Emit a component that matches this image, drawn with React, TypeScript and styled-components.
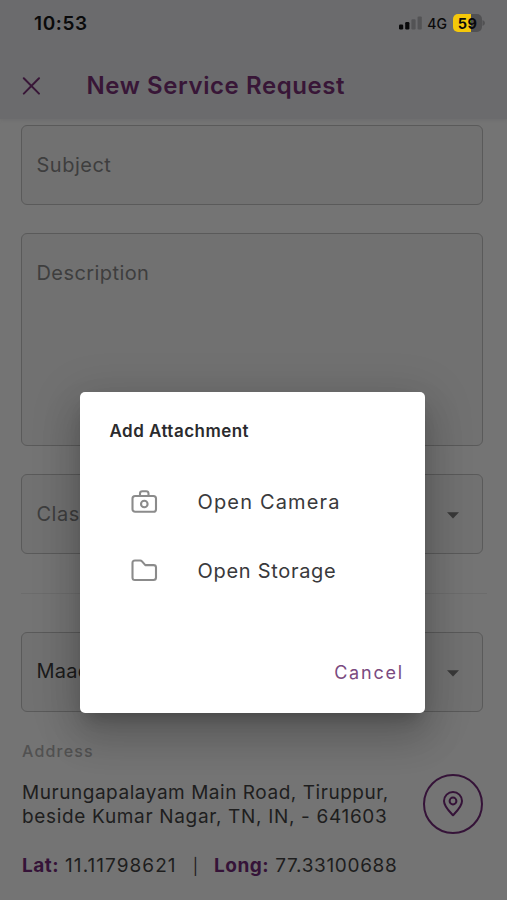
import React from "react";
import styled, { createGlobalStyle } from "styled-components";

const GlobalStyle = createGlobalStyle`
  * { box-sizing: border-box; }
  html, body { margin: 0; padding: 0; background: #747474; }
  body { font-family: Inter, "Noto Sans", sans-serif; overflow: hidden; }
  button { font: inherit; background: none; border: 0; padding: 0; margin: 0; color: inherit; }
`;

const Screen = styled.div`
  position: relative;
  width: 507px;
  height: 900px;
  background: #747474;
  overflow: hidden;
`;

const TopArea = styled.header`
  height: 119px;
  background: #6b6b6d;
  box-shadow: 0 1px 3px rgba(107, 107, 109, 0.8);
`;

const StatusBar = styled.div`
  display: flex;
  justify-content: space-between;
  align-items: center;
  height: 46px;
  padding: 0 22px 0 34px;
  color: #0a0a0b;
`;

const Clock = styled.span`
  font-size: 19px;
  font-weight: 600;
  letter-spacing: 0.6px;
`;

const StatusIcons = styled.div`
  display: flex;
  align-items: center;
`;

const Network = styled.span`
  margin: 0 6px 0 5px;
  font-size: 14px;
  font-weight: 500;
  letter-spacing: 0.1px;
`;

const Battery = styled.div`
  display: flex;
  align-items: center;
  justify-content: center;
  width: 29px;
  height: 18px;
  border-radius: 5px;
  background: linear-gradient(90deg, #f5c80a 0 18px, #515153 18px);
  font-size: 14.5px;
  font-weight: 700;
  letter-spacing: 0.3px;
`;

const TitleBar = styled.div`
  display: flex;
  align-items: center;
  height: 79px;
  padding-left: 22px;
  color: #381637;
`;

const CloseButton = styled.button`
  display: flex;
  width: 64.5px;
`;

const Title = styled.h1`
  margin: 0;
  font-size: 24px;
  font-weight: 600;
  letter-spacing: 0.58px;
`;

const Form = styled.main`
  display: flex;
  flex-direction: column;
  padding: 6px 24px 0 21px;
`;

const Field = styled.div<{ $height?: number; $filled?: boolean }>`
  display: flex;
  justify-content: space-between;
  height: ${(p) => p.$height ?? 80}px;
  margin-bottom: 28px;
  padding: 25px 23px 0 14.5px;
  border: 1.5px solid #5a5a5a;
  border-radius: 6px;
  background: #717171;
  color: ${(p) => (p.$filled ? "#1b1b1b" : "#3e3e3e")};
`;

const FieldLabel = styled.span<{ $spacing: number; $lineHeight?: number }>`
  font-size: 20px;
  line-height: ${(p) => p.$lineHeight ?? 28}px;
  letter-spacing: ${(p) => p.$spacing}px;
`;

const Arrow = styled.svg`
  margin-top: 11.5px;
`;

const Divider = styled.hr`
  width: 466px;
  height: 1px;
  margin: 11px 0 38px;
  border: 0;
  background: #6c6c6c;
`;

const AddressLabel = styled.div`
  margin: -1px 0 0 1px;
  font-size: 16px;
  font-weight: 500;
  line-height: 24px;
  letter-spacing: 1.2px;
  color: #515151;
`;

const AddressRow = styled.div`
  display: flex;
  justify-content: space-between;
  height: 87px;
  padding: 11px 0 0 1px;
`;

const AddressText = styled.div`
  padding-top: 7px;
  font-size: 19px;
  line-height: 23.5px;
  color: #1e1e1e;
`;

const AddressLine = styled.div<{ $spacing: number }>`
  letter-spacing: ${(p) => p.$spacing}px;
  white-space: nowrap;
`;

const PinButton = styled.button`
  display: flex;
  align-items: center;
  justify-content: center;
  width: 60px;
  height: 60px;
  border: 2px solid #351338;
  border-radius: 50%;
`;

const Coordinates = styled.div`
  display: flex;
  margin: 4px 0 0 1px;
  font-size: 19px;
  line-height: 24px;
  color: #1e1e1e;
  white-space: pre;
`;

const CoordinateName = styled.strong`
  margin-right: 1px;
  font-weight: 700;
  letter-spacing: 0.5px;
  color: #351338;
`;

const CoordinateValue = styled.span<{ $spacing: number }>`
  letter-spacing: ${(p) => p.$spacing}px;
`;

const Separator = styled.span`
  width: 37.5px;
  font-size: 16px;
  text-align: center;
`;

const Dialog = styled.section`
  position: absolute;
  left: 79.5px;
  top: 391.5px;
  display: flex;
  flex-direction: column;
  width: 345px;
  height: 321.5px;
  padding: 27.5px 20.5px 0 30px;
  border-radius: 5px;
  background: #fff;
  box-shadow: 0 11px 15px -7px rgba(0, 0, 0, 0.2), 0 24px 38px 3px rgba(0, 0, 0, 0.14),
    0 9px 46px 8px rgba(0, 0, 0, 0.12);
`;

const DialogTitle = styled.h2`
  margin: 0 0 24px;
  font-size: 17px;
  font-weight: 600;
  line-height: 24px;
  letter-spacing: 0.47px;
  color: #2b2b2d;
`;

const Option = styled.button`
  display: flex;
  align-items: center;
  height: 69px;
  padding-left: 21px;
  gap: 39px;
  color: #8b8b8b;
`;

const OptionText = styled.span<{ $spacing: number }>`
  font-size: 20px;
  letter-spacing: ${(p) => p.$spacing}px;
  color: #39393b;
`;

const CancelButton = styled.button`
  align-self: flex-end;
  margin-top: 56px;
  font-size: 18px;
  line-height: 24px;
  letter-spacing: 1.8px;
  color: #7b4a80;
`;

const SignalIcon = () => (
  <svg width="23" height="14" viewBox="0 0 23 14">
    <rect x="0" y="8.5" width="4.2" height="5" rx="1.2" fill="#09090a" />
    <rect x="6.2" y="6" width="4.2" height="7.5" rx="1.2" fill="#09090a" />
    <rect x="12.4" y="3.2" width="4.2" height="10.3" rx="1.2" fill="#535355" />
    <rect x="18.6" y="0.4" width="4.2" height="13.1" rx="1.2" fill="#535355" />
  </svg>
);

const BatteryTip = () => (
  <svg width="3" height="8" viewBox="0 0 3 8">
    <path d="M0.5 1Q3 2 3 4T0.5 7Z" fill="#515153" />
  </svg>
);

const CloseIcon = () => (
  <svg width="19" height="18" viewBox="0 0 19 18" fill="none" stroke="currentColor" strokeWidth="2" strokeLinecap="round">
    <path d="M1.8 1.3 17 16.6M17 1.3 1.8 16.6" />
  </svg>
);

const DropArrow = () => (
  <Arrow width="12" height="7" viewBox="0 0 12 7">
    <path d="M0 .3H12L6 6.5Z" fill="#393939" />
  </Arrow>
);

const PinIcon = () => (
  <svg width="22" height="26" viewBox="0 0 22 26" fill="none" stroke="#351338" strokeWidth="2">
    <path d="M11 24.3C8 21 2 15.6 2 10a9 9 0 0 1 18 0c0 5.6-6 11-9 14.3Z" strokeLinejoin="round" />
    <circle cx="11" cy="10" r="3.4" />
  </svg>
);

const CameraIcon = () => (
  <svg width="28" height="26" viewBox="0 0 28 26" fill="none" stroke="currentColor" strokeWidth="2.1">
    <rect x="1.5" y="7" width="23.5" height="15.8" rx="2.6" />
    <path d="M9 7V4.6Q9 2.2 11.4 2.2H15.1Q17.5 2.2 17.5 4.6V7" />
    <circle cx="13.3" cy="15" r="3.3" />
  </svg>
);

const FolderIcon = () => (
  <svg width="28" height="26" viewBox="0 0 28 26" fill="none" stroke="currentColor" strokeWidth="2.1" strokeLinejoin="round">
    <path d="M4 2.5H9.2Q10.2 2.5 11 3.4L14.3 7.1H22.5Q25 7.1 25 9.5V19.5Q25 22 22.5 22H4Q1.5 22 1.5 19.5V5Q1.5 2.5 4 2.5Z" />
  </svg>
);

export default function App() {
  return (
    <>
      <GlobalStyle />
      <Screen>
        <TopArea>
          <StatusBar>
            <Clock>10:53</Clock>
            <StatusIcons>
              <SignalIcon />
              <Network>4G</Network>
              <Battery>59</Battery>
              <BatteryTip />
            </StatusIcons>
          </StatusBar>
          <TitleBar>
            <CloseButton aria-label="Close"><CloseIcon /></CloseButton>
            <Title>New Service Request</Title>
          </TitleBar>
        </TopArea>
        <Form>
          <Field><FieldLabel $spacing={0.5}>Subject</FieldLabel></Field>
          <Field $height={213}><FieldLabel $spacing={0.42}>Description</FieldLabel></Field>
          <Field><FieldLabel $spacing={0.5}>Class</FieldLabel><DropArrow /></Field>
          <Divider />
          <Field $filled><FieldLabel $spacing={0.2} $lineHeight={27}>Maad</FieldLabel><DropArrow /></Field>
          <AddressLabel>Address</AddressLabel>
          <AddressRow>
            <AddressText>
              <AddressLine $spacing={0.54}>Murungapalayam Main Road, Tiruppur,</AddressLine>
              <AddressLine $spacing={0.67}>beside Kumar Nagar, TN, IN, - 641603</AddressLine>
            </AddressText>
            <PinButton aria-label="Show on map"><PinIcon /></PinButton>
          </AddressRow>
          <Coordinates>
            <CoordinateName>Lat: </CoordinateName>
            <CoordinateValue $spacing={1.05}>11.11798621</CoordinateValue>
            <Separator>|</Separator>
            <CoordinateName>Long: </CoordinateName>
            <CoordinateValue $spacing={0.67}>77.33100688</CoordinateValue>
          </Coordinates>
        </Form>
        <Dialog role="dialog" aria-label="Add Attachment">
          <DialogTitle>Add Attachment</DialogTitle>
          <Option><CameraIcon /><OptionText $spacing={1.15}>Open Camera</OptionText></Option>
          <Option><FolderIcon /><OptionText $spacing={0.7}>Open Storage</OptionText></Option>
          <CancelButton>Cancel</CancelButton>
        </Dialog>
      </Screen>
    </>
  );
}
